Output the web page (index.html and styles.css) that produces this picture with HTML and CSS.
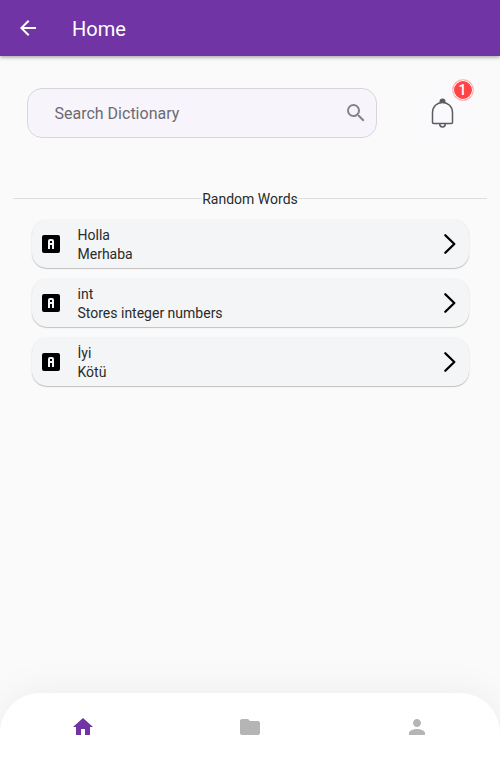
FILE: index.html
```html
<!DOCTYPE html>
<html lang="en">
<head>
<meta charset="utf-8">
<title>Home</title>
<link rel="stylesheet" href="styles.css">
</head>
<body>
<svg class="defs" width="0" height="0" aria-hidden="true">
  <symbol id="word" viewBox="0 0 24 24"><path d="M11 7a2 2 0 0 0-2 2v8h2v-4h2v4h2V9a2 2 0 0 0-2-2h-2m0 2h2v2h-2V9M5 3h14a2 2 0 0 1 2 2v14a2 2 0 0 1-2 2H5a2 2 0 0 1-2-2V5a2 2 0 0 1 2-2z"/></symbol>
  <symbol id="chevron" viewBox="0 0 24 24"><path d="M7.3 3.2 16.3 12l-9 8.8" fill="none" stroke="#000" stroke-width="2.3" stroke-linecap="round" stroke-linejoin="round"/></symbol>
</svg>
<div class="app">
  <header class="bar">
    <svg class="icon" viewBox="0 0 24 24"><path d="M20 11H7.83l5.59-5.59L12 4l-8 8 8 8 1.41-1.41L7.83 13H20v-2z"/></svg>
    <h1 class="title">Home</h1>
  </header>
  <main class="content">
    <div class="tools">
      <div class="search">
        <span>Search Dictionary</span>
        <svg class="icon" viewBox="0 0 24 24"><path d="M15.5 14h-.79l-.28-.27A6.471 6.471 0 0 0 16 9.5 6.5 6.5 0 1 0 9.5 16c1.61 0 3.09-.59 4.23-1.57l.27.28v.79l5 4.99L20.49 19l-4.99-5zm-6 0C7.01 14 5 11.99 5 9.5S7.01 5 9.5 5 14 7.01 14 9.5 11.99 14 9.5 14z"/></svg>
      </div>
      <div class="bell">
        <svg width="26" height="32" viewBox="0 0 26 32" fill="none" stroke="#5c5b5f" stroke-width="1.5">
          <path d="M2.500 25.500V15.600C2.500 9.400 7 5.500 12.500 5.500S22.500 9.400 22.500 15.600V25.500q0 1-1 1H3.500Q2.500 26.500 2.500 25.500z"/>
          <path d="M9.700 26.700a2.800 3.200 0 0 0 5.600 0"/>
          <path d="M9.500 6V4.500a3 3 0 0 1 6 0V6z" fill="#5c5b5f" stroke="none"/>
        </svg>
        <span class="badge">1</span>
      </div>
    </div>
    <div class="divider"><h2>Random Words</h2></div>
    <div class="list">
      <div class="card"><svg class="icon"><use href="#word"/></svg><div class="text"><div>Holla</div><div>Merhaba</div></div><svg class="icon"><use href="#chevron"/></svg></div>
      <div class="card"><svg class="icon"><use href="#word"/></svg><div class="text"><div>int</div><div>Stores integer numbers</div></div><svg class="icon"><use href="#chevron"/></svg></div>
      <div class="card"><svg class="icon"><use href="#word"/></svg><div class="text"><div>İyi</div><div>Kötü</div></div><svg class="icon"><use href="#chevron"/></svg></div>
    </div>
  </main>
  <nav class="nav">
    <a class="active"><svg class="icon" viewBox="0 0 24 24"><path d="M10 20v-6h4v6h5v-8h3L12 3 2 12h3v8z"/></svg></a>
    <a><svg class="icon" viewBox="0 0 24 24"><path d="M10 4H4c-1.100 0-1.990.9-1.990 2L2 18c0 1.100.9 2 2 2h16c1.100 0 2-.9 2-2V8c0-1.100-.9-2-2-2h-8l-2-2z"/></svg></a>
    <a><svg class="icon" viewBox="0 0 24 24"><path d="M12 12c2.210 0 4-1.790 4-4s-1.790-4-4-4-4 1.790-4 4 1.790 4 4 4zm0 2c-2.670 0-8 1.340-8 4v2h16v-2c0-2.660-5.330-4-8-4z"/></svg></a>
  </nav>
</div>
</body>
</html>
```
FILE: styles.css
```css
* { box-sizing: border-box; }
body { margin: 0; background: #fafafa; color: #2a2a2a; font-family: Roboto, sans-serif; }
h1, h2 { margin: 0; font-weight: 400; }
.defs { display: none; }
.app { height: 761px; display: flex; flex-direction: column; overflow: hidden; }
.icon { width: 24px; height: 24px; flex: none; fill: currentColor; display: block; }
.bar {
  height: 56px; flex: none; display: flex; align-items: center; gap: 32px; padding: 0 16px;
  background: #7034a5; color: #fff; box-shadow: 0 1px 4px rgba(0, 0, 0, .4);
}
.title { font-size: 20px; line-height: 24px; padding-top: 2px; }
.content { flex: 1; }
.tools { display: flex; align-items: center; justify-content: space-between; padding: 26px 26.500px 0 26.500px; }
.search {
  width: 350px; height: 50px; display: flex; align-items: center; justify-content: space-between;
  padding: 0 8px 0 27px; border: 1px solid #d8d6dc; border-radius: 15px;
  background: #f7f5fb; color: #6c6a70; font-size: 16px;
}
.search .icon { color: #858387; }
.bell {
  position: relative; width: 62px; height: 62px; border-radius: 50%; background: #faf9fc;
  display: flex; align-items: center; justify-content: center;
}
.badge {
  position: absolute; left: 40px; top: -3px; width: 22px; height: 22px; border-radius: 50%;
  border: 1px solid #ffc4c4; background: #ff4545; box-shadow: inset 0 0 0 1px #fff;
  color: #fff; font-size: 14px; font-weight: 500; line-height: 21px; text-align: center;
}
.divider { display: flex; align-items: center; margin: 44px 13px 0; height: 20px; }
.divider::before, .divider::after { content: ""; flex: 1; height: 1px; background: #dedede; }
.divider h2 { font-size: 14px; line-height: 20px; padding-top: 1px; }
.list { display: flex; flex-direction: column; gap: 11px; padding: 12px 31.500px 0; }
.card {
  height: 48px; display: flex; align-items: center; padding: 0 7px; border-radius: 15px;
  background: #f4f5f7; box-shadow: 0 1px 1px rgba(0, 0, 0, .22), 0 0 2px rgba(0, 0, 0, .08);
}
.card .icon { color: #000; }
.text { flex: 1; padding: 1px 0 0 15px; font-size: 14px; line-height: 19px; }
.nav {
  height: 68px; flex: none; display: flex; border-radius: 40px 40px 0 0; background: #fff;
  box-shadow: 0 0 40px rgba(0, 0, 0, .06); color: #b5b5b5;
}
.nav a { flex: 1; display: flex; justify-content: center; padding-top: 22px; }
.nav .active { color: #7034a5; }
```
